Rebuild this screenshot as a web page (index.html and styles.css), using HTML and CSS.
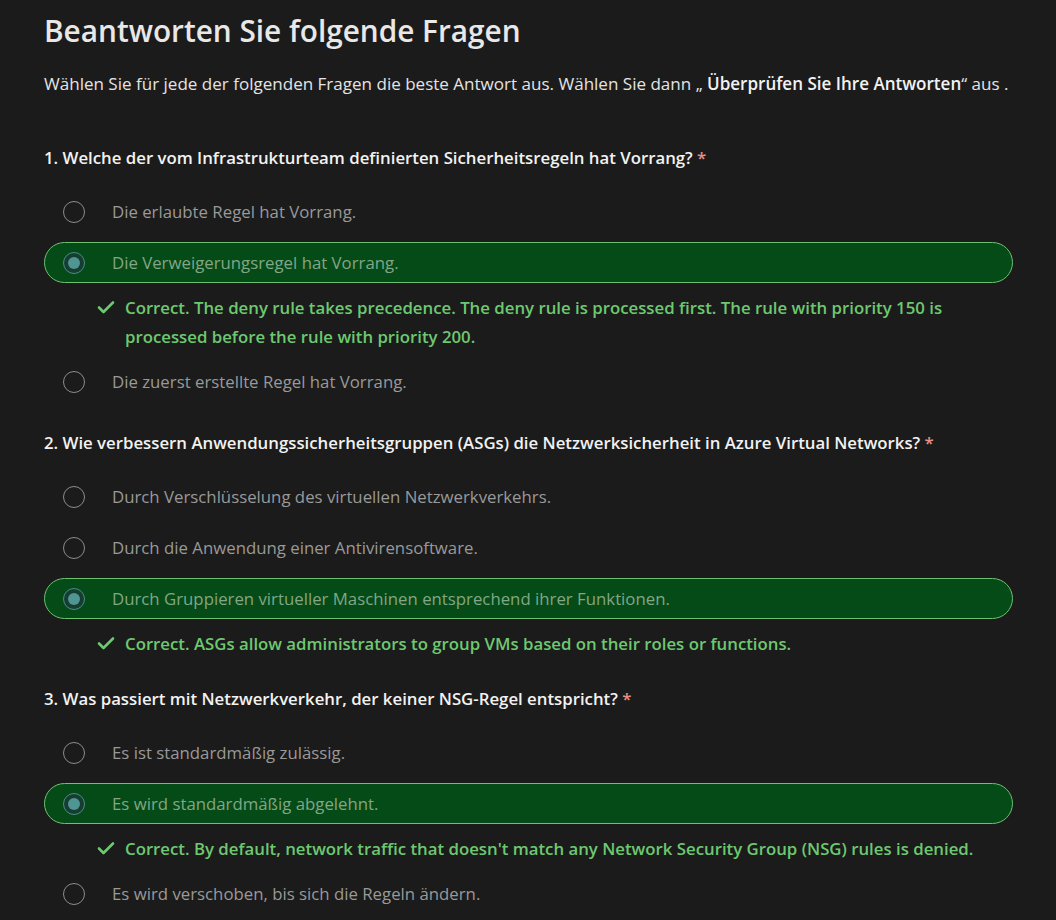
FILE: index.html
```html
<!DOCTYPE html>
<html lang="de">
<head>
<meta charset="utf-8">
<title>Beantworten Sie folgende Fragen</title>
<link rel="stylesheet" href="styles.css">
</head>
<body>
<main class="page">
  <h1 class="title">Beantworten Sie folgende Fragen</h1>
  <p class="intro">Wählen Sie für jede der folgenden Fragen die beste Antwort aus. Wählen Sie dann „ <strong>Überprüfen Sie Ihre Antworten</strong>“ aus .</p>

  <section class="question">
    <h2 class="q-text">1. Welche der vom Infrastrukturteam definierten Sicherheitsregeln hat Vorrang? <span class="req">*</span></h2>
    <div class="option"><span class="radio"></span><span class="opt-label">Die erlaubte Regel hat Vorrang.</span></div>
    <div class="option selected"><span class="radio"></span><span class="opt-label">Die Verweigerungsregel hat Vorrang.</span></div>
    <div class="feedback"><svg class="check" viewBox="0 0 20 20" width="20" height="20"><path d="M3 10.5 L7.5 15 L17 5.5" fill="none" stroke="currentColor" stroke-width="2.6" stroke-linecap="round" stroke-linejoin="round"/></svg><span>Correct. The deny rule takes precedence. The deny rule is processed first. The rule with priority 150 is processed before the rule with priority 200.</span></div>
    <div class="option"><span class="radio"></span><span class="opt-label">Die zuerst erstellte Regel hat Vorrang.</span></div>
  </section>

  <section class="question">
    <h2 class="q-text">2. Wie verbessern Anwendungssicherheitsgruppen (ASGs) die Netzwerksicherheit in Azure Virtual Networks? <span class="req">*</span></h2>
    <div class="option"><span class="radio"></span><span class="opt-label">Durch Verschlüsselung des virtuellen Netzwerkverkehrs.</span></div>
    <div class="option"><span class="radio"></span><span class="opt-label">Durch die Anwendung einer Antivirensoftware.</span></div>
    <div class="option selected"><span class="radio"></span><span class="opt-label">Durch Gruppieren virtueller Maschinen entsprechend ihrer Funktionen.</span></div>
    <div class="feedback"><svg class="check" viewBox="0 0 20 20" width="20" height="20"><path d="M3 10.5 L7.5 15 L17 5.5" fill="none" stroke="currentColor" stroke-width="2.6" stroke-linecap="round" stroke-linejoin="round"/></svg><span>Correct. ASGs allow administrators to group VMs based on their roles or functions.</span></div>
  </section>

  <section class="question">
    <h2 class="q-text">3. Was passiert mit Netzwerkverkehr, der keiner NSG-Regel entspricht? <span class="req">*</span></h2>
    <div class="option"><span class="radio"></span><span class="opt-label">Es ist standardmäßig zulässig.</span></div>
    <div class="option selected"><span class="radio"></span><span class="opt-label">Es wird standardmäßig abgelehnt.</span></div>
    <div class="feedback"><svg class="check" viewBox="0 0 20 20" width="20" height="20"><path d="M3 10.5 L7.5 15 L17 5.5" fill="none" stroke="currentColor" stroke-width="2.6" stroke-linecap="round" stroke-linejoin="round"/></svg><span>Correct. By default, network traffic that doesn't match any Network Security Group (NSG) rules is denied.</span></div>
    <div class="option"><span class="radio"></span><span class="opt-label">Es wird verschoben, bis sich die Regeln ändern.</span></div>
  </section>
</main>
</body>
</html>
```

FILE: styles.css
```css
html, body {
  margin: 0;
  padding: 0;
  background: #1b1b1b;
}

body {
  font-family: "Segoe UI", "Open Sans", "Noto Sans", sans-serif;
  color: #e6e6e6;
  overflow: hidden;
}

.page {
  padding: 10px 43px 0 44px;
}

.title {
  margin: 0;
  font-size: 29.75px;
  font-weight: 600;
  line-height: 42px;
  color: #e8e8e8;
}

.intro {
  margin: 20px 0 50px;
  font-size: 17.05px;
  line-height: 24px;
  color: #e4e4e4;
}

.intro strong {
  font-weight: 600;
  color: #f2f2f2;
}

.question {
  margin-top: 29px;
}

.q-text {
  margin: 0 0 21px;
  font-size: 16.8px;
  font-weight: 600;
  line-height: 24px;
  color: #f2f2f2;
}

.req {
  color: #e58f86;
  font-weight: 600;
}

.option {
  display: flex;
  align-items: center;
  height: 41px;
  margin-top: 10px;
  padding-left: 18px;
  border: 1px solid transparent;
  border-radius: 21px;
  box-sizing: border-box;
}

.q-text + .option {
  margin-top: 0;
}

.radio {
  width: 22px;
  height: 22px;
  box-sizing: border-box;
  border: 1.5px solid #8c8c8c;
  border-radius: 50%;
  flex: none;
  display: flex;
  align-items: center;
  justify-content: center;
}

.opt-label {
  margin-left: 27px;
  font-size: 16.8px;
  color: #999999;
}

.option.selected {
  background: #054b17;
  border-color: #6dc16f;
}

.option.selected .radio {
  border-color: #4a8c88;
  background: #173d30;
}

.option.selected .radio::after {
  content: "";
  width: 12px;
  height: 12px;
  border-radius: 50%;
  background: #4f9593;
}

.option.selected .opt-label {
  color: #82a686;
}

.feedback {
  display: flex;
  align-items: flex-start;
  margin: 10px 0 0 52px;
  color: #6dc970;
  font-size: 16.8px;
  font-weight: 600;
  line-height: 29px;
}

.feedback .check {
  flex: none;
  margin: 4px 9px 0 0;
}

.feedback + .option {
  margin-top: 10px;
}
```
